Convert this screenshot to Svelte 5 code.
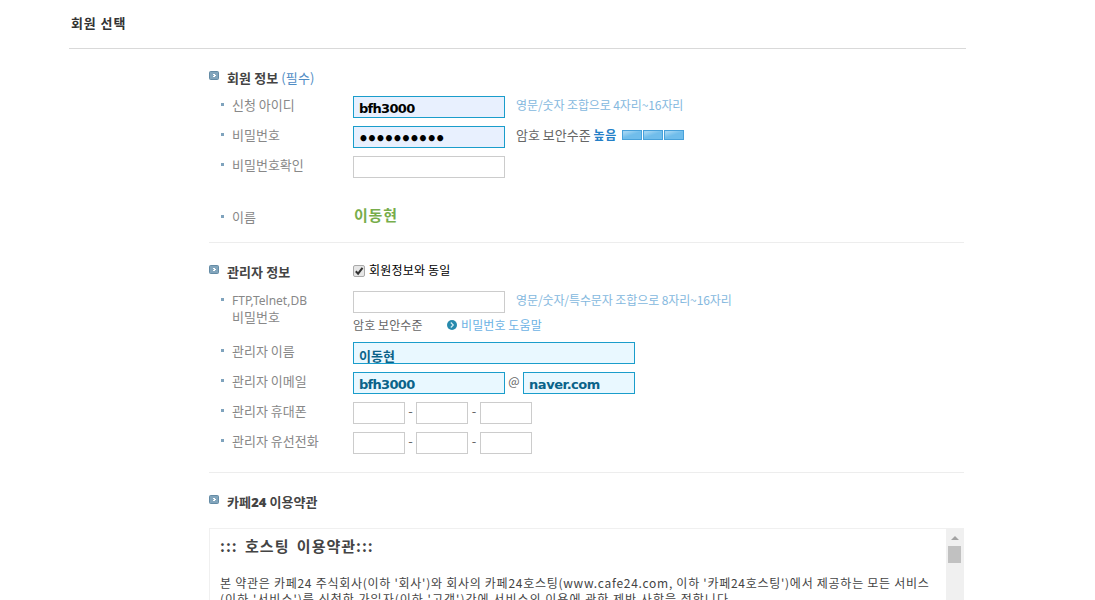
<script lang="ts">
  let userId = $state('bfh3000');
  let password = $state('1234567890');
  let passwordConfirm = $state('');
  let ftpPassword = $state('');
  let sameAsMember = $state(true);
  let adminName = $state('이동현');
  let mailId = $state('bfh3000');
  let mailHost = $state('naver.com');

  const phones = $state([
    { label: '관리자 휴대폰', parts: ['', '', ''] },
    { label: '관리자 유선전화', parts: ['', '', ''] }
  ]);
</script>

{#snippet marker()}
  <svg class="marker" width="10" height="9" viewBox="0 0 10 9">
    <rect x="0.5" y="0.5" width="9" height="8" rx="1" fill="#82a5bc" stroke="#648ba5" />
    <path d="M4 3h2v1h1v1H6v1H4V5h1V4H4z" fill="#fff" />
  </svg>
{/snippet}

<main>
  <h1>회원 선택</h1>

  <form class="content">
    <section class="member">
      <h2>{@render marker()}<span>회원 정보 <em>(필수)</em></span></h2>

      <div class="row">
        <div class="label">신청 아이디</div>
        <input class="field auto" type="text" bind:value={userId} />
        <span class="hint">영문/숫자 조합으로 4자리~16자리</span>
      </div>
      <div class="row">
        <div class="label">비밀번호</div>
        <input class="field auto password" type="password" bind:value={password} />
        <span class="strength">암호 보안수준 <b>높음</b></span>
        <span class="bars"><i></i><i></i><i></i></span>
      </div>
      <div class="row">
        <div class="label">비밀번호확인</div>
        <input class="field" type="password" bind:value={passwordConfirm} />
      </div>
      <div class="row name-row">
        <div class="label">이름</div>
        <strong class="name">이동현</strong>
      </div>
    </section>

    <section class="admin">
      <h2>
        {@render marker()}<span class="admin-title">관리자 정보</span>
        <label class="same">
          <input type="checkbox" bind:checked={sameAsMember} />
          <svg width="12" height="12" viewBox="0 0 12 12">
            <rect x="0.5" y="0.5" width="11" height="11" rx="1.5" fill="#e6e6e6" stroke="#a9a9a9" />
            {#if sameAsMember}
              <path d="M2.8 6.2l2.3 2.5L9.5 2.8" fill="none" stroke="#333" stroke-width="2" />
            {/if}
          </svg>
          <span>회원정보와 동일</span>
        </label>
      </h2>

      <div class="row ftp">
        <div class="label"><span class="latin">FTP,Telnet,DB</span><br />비밀번호</div>
        <div>
          <div class="line">
            <input class="field" type="password" bind:value={ftpPassword} />
            <span class="hint">영문/숫자/특수문자 조합으로 8자리~16자리</span>
          </div>
          <div class="line help-line">
            <span class="level">암호 보안수준</span>
            <svg width="10" height="10" viewBox="0 0 10 10">
              <circle cx="5" cy="5" r="5" fill="#278aad" />
              <path d="M3.8 2.5L6.3 5L3.8 7.5" fill="none" stroke="#d5edf5" stroke-width="1.2" />
            </svg>
            <a href="#help">비밀번호 도움말</a>
          </div>
        </div>
      </div>
      <div class="row">
        <div class="label">관리자 이름</div>
        <input class="field filled long" type="text" bind:value={adminName} />
      </div>
      <div class="row">
        <div class="label">관리자 이메일</div>
        <input class="field filled" type="text" bind:value={mailId} />
        <span class="at">@</span>
        <input class="field filled host" type="text" bind:value={mailHost} />
      </div>
      {#each phones as phone}
        <div class="row">
          <div class="label">{phone.label}</div>
          {#each phone.parts as _, i}
            {#if i > 0}<span class="dash">-</span>{/if}
            <input class="field short" type="text" bind:value={phone.parts[i]} />
          {/each}
        </div>
      {/each}
    </section>

    <section class="agreement">
      <h2>{@render marker()}<span class="terms-title">카페<b>24</b> 이용약관</span></h2>
      <div class="terms">
        <div class="terms-body">
          <h3>::: 호스팅 이용약관:::</h3>
          <p class="first">본 약관은 카페24 주식회사(이하 '회사')와 회사의 카페24호스팅(www.cafe24.com, 이하 '카페24호스팅')에서 제공하는 모든 서비스</p>
          <p class="second">(이하 '서비스')를 신청한 가입자(이하 '고객')간에 서비스의 이용에 관한 제반 사항을 정합니다.</p>
        </div>
        <div class="scrollbar">
          <svg width="8" height="4" viewBox="0 0 8 4"><path d="M4 0l4 4H0z" fill="#a3a3a3" /></svg>
          <div class="thumb"></div>
        </div>
      </div>
    </section>
  </form>
</main>

<style>
  :global(body) {
    background: #fff;
    overflow: hidden;
  }

  main {
    box-sizing: border-box;
    width: 1095px;
    height: 600px;
    padding-left: 69px;
    overflow: hidden;
    font-family: 'Noto Sans CJK KR', sans-serif;
    font-size: 13px;
    line-height: 16px;
    color: #666;
    white-space: nowrap;
  }

  h1, h2, h3, p {
    margin: 0;
  }

  h1 {
    box-sizing: border-box;
    width: 897px;
    height: 49px;
    padding: 15px 0 0 2px;
    border-bottom: 1px solid #d9d9d9;
    font-size: 13px;
    letter-spacing: 0.9px;
    color: #333;
  }

  .content {
    width: 755px;
    margin-left: 140px;
  }

  section {
    box-sizing: border-box;
  }

  .member {
    height: 194px;
    padding-top: 20px;
    border-bottom: 1px solid #ededed;
  }

  .admin {
    height: 230px;
    padding-top: 20px;
    border-bottom: 1px solid #ededed;
  }

  .agreement {
    padding-top: 20px;
  }

  h2 {
    display: flex;
    align-items: flex-start;
    height: 27px;
    font-size: 13px;
    line-height: 18px;
    letter-spacing: 0.1px;
    color: #444;
  }

  .admin h2 {
    height: 28px;
  }

  .agreement h2 {
    height: 35px;
  }

  .marker {
    flex: none;
    margin: 2px 8px 0 0;
  }

  em {
    font-style: normal;
    font-weight: normal;
    color: #4f8cc4;
  }

  .terms-title b {
    font-family: 'Noto Sans', sans-serif;
    font-size: 13px;
    letter-spacing: 0;
  }

  .admin-title {
    width: 126px;
  }

  .same {
    display: flex;
    font-size: 12px;
    font-weight: normal;
    letter-spacing: 0.2px;
    line-height: 14px;
    color: #000;
  }

  .same input {
    position: absolute;
    opacity: 0;
  }

  .same svg {
    margin: 2px 4px 0 0;
  }

  .row {
    display: flex;
    align-items: flex-start;
    height: 30px;
  }

  .label {
    position: relative;
    flex: none;
    box-sizing: border-box;
    width: 144px;
    padding: 1px 0 0 23px;
    color: #888;
  }

  .label::before {
    content: '';
    position: absolute;
    left: 12px;
    top: 7px;
    width: 3px;
    height: 3px;
    background: #7fa3bd;
  }

  .latin {
    font-family: 'Noto Sans', sans-serif;
    font-size: 12px;
  }

  .ftp .label {
    line-height: 15.5px;
  }

  .field {
    flex: none;
    box-sizing: border-box;
    width: 152px;
    height: 22px;
    margin: 0;
    padding: 2px 5px 0;
    border: 1px solid #ccc;
    border-radius: 0;
    outline: none;
    background: #fff;
    font: bold 13px 'DejaVu Sans', 'Noto Sans CJK KR', sans-serif;
    letter-spacing: -0.7px;
    color: #000;
  }

  .auto {
    border-color: #1a9dcb;
    background: #e8f0fe;
  }

  .password {
    padding: 4px 4px 0;
    font-size: 17px;
    letter-spacing: -2.35px;
  }

  .filled {
    border-color: #1a9dcb;
    background: #e9f8ff;
    color: #0b6389;
  }

  .long {
    width: 282px;
    padding-top: 4px;
    font-size: 13px;
    letter-spacing: 0;
  }

  .host {
    width: 112px;
    letter-spacing: -0.45px;
  }

  .short {
    width: 52px;
  }

  .hint {
    margin: 1px 0 0 11px;
    font-size: 12px;
    letter-spacing: -0.1px;
    color: #84b8de;
  }

  .strength {
    margin: 1px 5px 0 11px;
  }

  .strength b {
    font-size: 12px;
    letter-spacing: 0.5px;
    color: #2480c7;
  }

  .bars {
    display: flex;
    gap: 1px;
    margin-top: 4px;
  }

  .bars i {
    box-sizing: border-box;
    width: 20px;
    height: 10px;
    border: 1px solid #48a1da;
    background: linear-gradient(160deg, #9fd3f2 15%, #70bdeb 50%);
  }

  .name-row {
    margin-top: 22px;
  }

  .name {
    margin-top: -3px;
    padding-left: 1px;
    font-size: 15px;
    line-height: 20px;
    letter-spacing: 0.8px;
    color: #77ad4b;
  }

  .ftp {
    height: 51px;
  }

  .line {
    display: flex;
    height: 22px;
  }

  .help-line {
    align-items: center;
    height: 24px;
    font-size: 12px;
    letter-spacing: 0.1px;
  }

  .level {
    width: 94px;
  }

  .help-line a {
    margin-left: 4px;
    color: #6cb2e4;
    text-decoration: none;
  }

  .at {
    width: 18px;
    padding-top: 1px;
    text-align: center;
    font-size: 12px;
  }

  .dash {
    width: 11px;
    padding-top: 1px;
    text-align: center;
  }

  .short + .dash + .short + .dash {
    width: 12px;
  }

  .terms {
    display: flex;
    box-sizing: border-box;
    height: 160px;
    border: 1px solid #f0f0f0;
    border-right: 0;
  }

  .terms-body {
    width: 736px;
    padding: 7px 0 0 10px;
    box-sizing: border-box;
    font-size: 12px;
    color: #444;
  }

  .first {
    letter-spacing: 0.73px;
  }

  .second {
    letter-spacing: 1.02px;
  }

  h3 {
    height: 39px;
    font-size: 15px;
    line-height: 20px;
    letter-spacing: 1px;
    word-spacing: 3px;
    color: #444;
  }

  .scrollbar {
    width: 18px;
    background: #f0f0f0;
  }

  .scrollbar svg {
    display: block;
    margin: 7px 0 6px 5px;
  }

  .thumb {
    width: 13px;
    height: 17px;
    margin-left: 2px;
    background: #c1c1c1;
  }
</style>
